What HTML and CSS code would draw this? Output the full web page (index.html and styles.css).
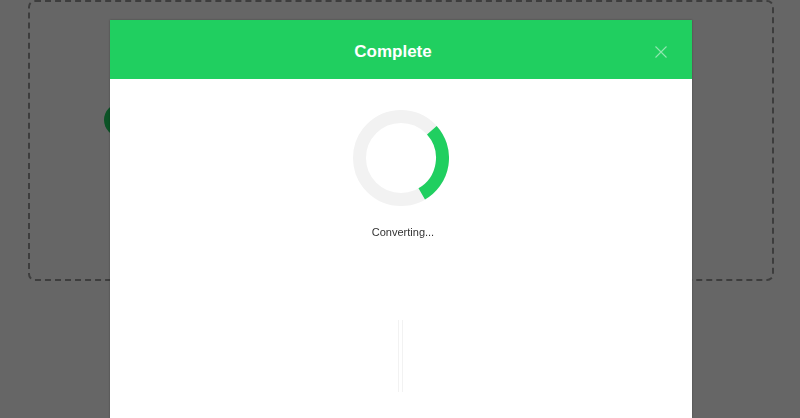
FILE: index.html
```html
<!DOCTYPE html>
<html>
<head>
<meta charset="utf-8">
<link rel="stylesheet" href="styles.css">
</head>
<body>
<div class="page">
  <div class="dropzone">
    <div class="file-dot"></div>
  </div>
</div>
<div class="overlay"></div>
<div class="modal">
  <div class="modal-header">
    <h2 class="modal-title">Complete</h2>
    <button class="modal-close" aria-label="Close">
      <svg width="14" height="14" viewBox="0 0 14 14"><path d="M1.5 1.5 L12.5 12.5 M12.5 1.5 L1.5 12.5" stroke="rgba(255,255,255,0.5)" stroke-width="1.1" fill="none"/></svg>
    </button>
  </div>
  <div class="modal-body">
    <svg class="spinner" width="96" height="96" viewBox="0 0 96 96">
      <circle cx="48" cy="48" r="41.5" fill="none" stroke="#f2f2f2" stroke-width="13"/>
      <path d="M78.84 20.23 A41.5 41.5 0 0 1 68.75 83.94" fill="none" stroke="#20cf60" stroke-width="13"/>
    </svg>
    <p class="status">Converting...</p>
    <div class="track"></div>
  </div>
</div>
</body>
</html>
```
FILE: styles.css
```css
* { box-sizing: border-box; }
html, body {
  margin: 0;
  height: 100%;
  overflow: hidden;
  background: #fff;
  font-family: "Liberation Sans", Arial, sans-serif;
}
.page {
  padding: 0 26px 0 28px;
}
.dropzone {
  width: 746px;
  height: 281px;
  border: 2px dashed #999;
  border-radius: 7px;
  padding: 101px 0 0 74px;
}
.file-dot {
  width: 34px;
  height: 34px;
  border-radius: 50%;
  background: #20cf60;
}
.overlay {
  position: fixed;
  inset: 0;
  background: rgba(0, 0, 0, 0.6);
}
.modal {
  position: absolute;
  left: 110px;
  top: 20px;
  width: 582px;
  height: 398px;
  overflow: hidden;
  background: #fff;
  box-shadow: 0 0 2px rgba(0, 0, 0, 0.3);
}
.modal-header {
  position: relative;
  height: 59px;
  background: #20cf60;
  display: flex;
  align-items: center;
  justify-content: center;
  padding: 4px 16px 0 0;
}
.modal-title {
  margin: 0;
  color: #fff;
  font-size: 17px;
  font-weight: bold;
  line-height: 20px;
}
.modal-close {
  position: absolute;
  right: 24px;
  top: 25px;
  width: 14px;
  height: 14px;
  padding: 0;
  border: 0;
  background: none;
  display: block;
}
.modal-close svg { display: block; }
.modal-body {
  display: flex;
  flex-direction: column;
  align-items: center;
  padding-top: 31px;
}
.spinner {
  display: block;
}
.status {
  margin: 20px 0 0 4px;
  font-size: 11px;
  line-height: 13px;
  color: #333;
}
.track {
  margin: 81px 0 0 -2px;
  width: 5px;
  height: 72px;
  border-left: 1px solid #f2f2f2;
  border-right: 1px solid #f2f2f2;
}
```
